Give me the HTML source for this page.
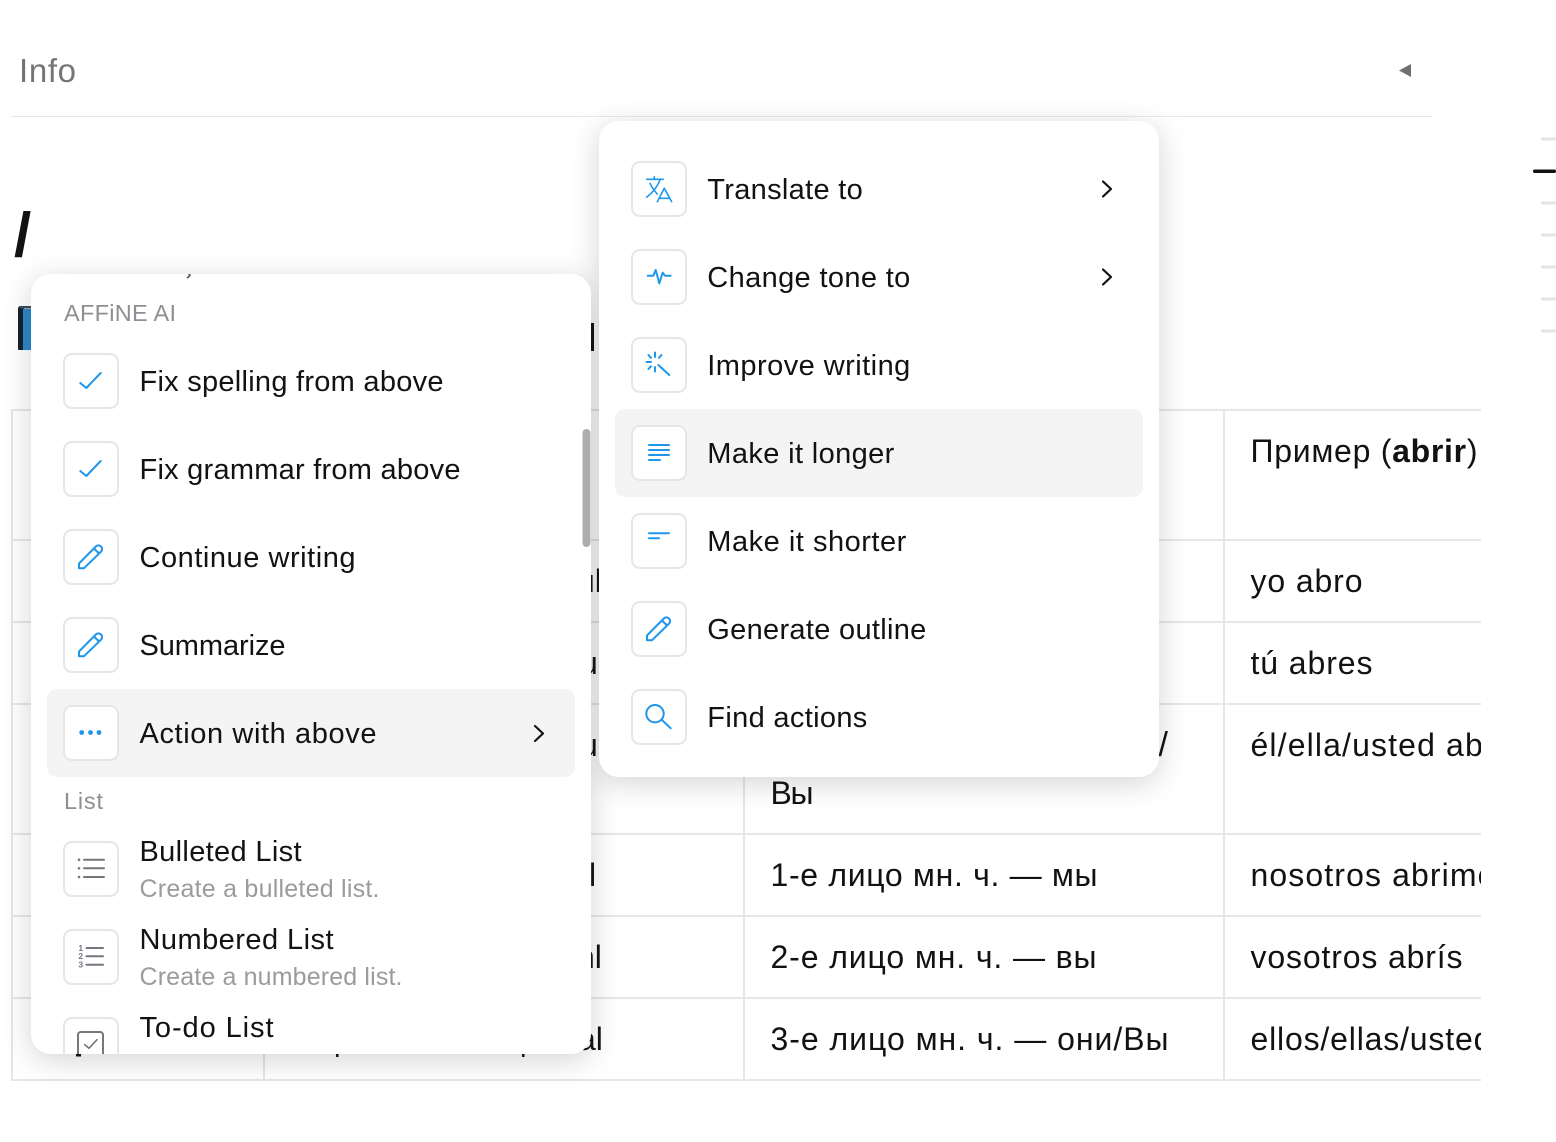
<!DOCTYPE html>
<html lang="en"><head><meta charset="utf-8"><title>Info</title>
<style>
html,body{margin:0;padding:0;background:#fff;width:1556px;height:1142px;overflow:hidden}
body{position:relative;font-family:"Liberation Sans",sans-serif}
svg{position:absolute;overflow:hidden}
svg text{font-family:"Liberation Sans",sans-serif;fill:#121212}
.menu{position:absolute;background:#fff;border-radius:20px;width:560px;overflow:hidden}
.shadow{position:absolute;border-radius:20px;width:560px;box-shadow:0 6px 30px rgba(40,40,50,.2)}
.t{font-size:29px}
.g{font-size:23.5px;fill:#8f8e93!important}
.d{font-size:25px;fill:#9b9b9e!important}
.r{font-size:32px}
.b{fill:#fff;stroke:#e6e6e6;stroke-width:2}
.i{fill:none;stroke:#1e96eb;stroke-width:2;stroke-linecap:round;stroke-linejoin:round}
.k{fill:none;stroke:#77757d;stroke-width:2;stroke-linecap:round;stroke-linejoin:round}
.c{fill:none;stroke:#121212;stroke-width:2.2;stroke-linecap:round;stroke-linejoin:round}
</style></head><body>

<svg width="1556" height="1142" style="left:0;top:0">
  <text x="19" y="82" font-size="33" textLength="57" style="fill:#757575">Info</text>
  <path d="M1399 70.5 L1411 64 V77 Z" fill="#6f6f6f"/>
  <rect x="11" y="116" width="1422" height="1" fill="#e8e8e8"/>
  <g fill="#e4e4e4">
    <rect x="1541" y="137.5" width="15" height="3" rx="1.5"/>
    <rect x="1541" y="201.5" width="15" height="3" rx="1.5"/>
    <rect x="1541" y="233.5" width="15" height="3" rx="1.5"/>
    <rect x="1541" y="265.5" width="15" height="3" rx="1.5"/>
    <rect x="1541" y="297.5" width="15" height="3" rx="1.5"/>
    <rect x="1541" y="329.5" width="15" height="3" rx="1.5"/>
  </g>
  <rect x="1533" y="169.5" width="23" height="3.5" rx="1.7" fill="#111"/>

  <text x="14" y="256" font-size="62" font-weight="bold" style="fill:#121212">/</text>

  <rect x="18" y="307" width="6" height="43" rx="1" fill="#15202b"/>
  <rect x="23" y="309" width="8" height="41" fill="#2b86c9"/>
  <rect x="19" y="306" width="12" height="2.5" fill="#3a4a58"/>
  <rect x="591" y="323" width="3" height="28" fill="#121212"/>

  <g fill="#e6e6e6">
    <rect x="11" y="409" width="1470" height="2"/>
    <rect x="11" y="539" width="1470" height="2"/>
    <rect x="11" y="621" width="1470" height="2"/>
    <rect x="11" y="703" width="1470" height="2"/>
    <rect x="11" y="833" width="1470" height="2"/>
    <rect x="11" y="915" width="1470" height="2"/>
    <rect x="11" y="997" width="1470" height="2"/>
    <rect x="11" y="1079" width="1470" height="2"/>
    <rect x="11" y="409" width="2" height="672"/>
    <rect x="263" y="409" width="2" height="672"/>
    <rect x="743" y="409" width="2" height="672"/>
    <rect x="1223" y="409" width="2" height="672"/>
  </g>

  <g class="r">
    <text class="r" x="577" y="592">ul</text>
    <text class="r" x="580" y="674">u</text>
    <text class="r" x="580" y="756">u</text>
    <text class="r" x="589" y="886">l</text>
    <text class="r" x="577" y="968">nl</text>
    <text class="r" x="578" y="1050">al</text>
    <rect x="336" y="1054" width="2.5" height="3" fill="#121212"/>
    <rect x="522" y="1054" width="2.5" height="3" fill="#121212"/>
    <rect x="76" y="1054" width="5" height="2.5" fill="#121212"/>

    <text class="r" x="1158.500" y="756" style="font-size:34px" textLength="9">/</text>
    <text class="r" x="770.500" y="804" textLength="43">Вы</text>
    <text class="r" x="770.500" y="886" textLength="327">1-е лицо мн. ч. — мы</text>
    <text class="r" x="770.500" y="968" textLength="326">2-е лицо мн. ч. — вы</text>
    <text class="r" x="770.500" y="1050" textLength="398">3-е лицо мн. ч. — они/Вы</text>
  </g>
  <svg x="0" y="0" width="1481" height="1142">
    <text class="r" x="1250.500" y="462" textLength="227">Пример (<tspan font-weight="bold">abrir</tspan>)</text>
    <text class="r" x="1250.500" y="592" textLength="112">yo abro</text>
    <text class="r" x="1250.500" y="674" textLength="122">tú abres</text>
    <text class="r" x="1250.500" y="756" textLength="263">él/ella/usted abre</text>
    <text class="r" x="1250.500" y="886" textLength="262">nosotros abrimos</text>
    <text class="r" x="1250.500" y="968" textLength="212">vosotros abrís</text>
    <text class="r" x="1250.500" y="1050" textLength="372">ellos/ellas/ustedes abren</text>
  </svg>
</svg>

<div class="shadow" style="left:31px;top:274px;height:780px"></div>
<div class="shadow" style="left:599px;top:121px;height:656px"></div>

<div class="menu" style="left:31px;top:274px;height:780px">
<svg width="560" height="780" style="left:0;top:0">
  <defs>
    <path id="pen" d="M16 39.200 V34.500 L32.800 17.500 A3.600 3.600 0 0 1 38 22.700 L21 39.200 Z M31 19.500 L36 24.500"/>
  </defs>
  <path d="M157 -1 L159 1 Q158 3 156 4" fill="none" stroke="#555" stroke-width="1.600"/>
  <text class="g" x="33" y="47" textLength="112">AFFiNE AI</text>

  <rect x="16" y="415" width="528" height="88" rx="10" fill="#f4f4f4"/>

  <g transform="translate(32,79)"><rect class="b" x="1" y="1" width="54" height="54" rx="8"/><path class="i" d="M17.300 30 L23.300 35 L37.700 20"/></g>
  <text class="t" x="108.500" y="117" textLength="304">Fix spelling from above</text>

  <g transform="translate(32,167)"><rect class="b" x="1" y="1" width="54" height="54" rx="8"/><path class="i" d="M17.300 30 L23.300 35 L37.700 20"/></g>
  <text class="t" x="108.500" y="205" textLength="321">Fix grammar from above</text>

  <g transform="translate(32,255)"><rect class="b" x="1" y="1" width="54" height="54" rx="8"/><use href="#pen" class="i"/></g>
  <text class="t" x="108.500" y="293" textLength="216">Continue writing</text>

  <g transform="translate(32,343)"><rect class="b" x="1" y="1" width="54" height="54" rx="8"/><use href="#pen" class="i"/></g>
  <text class="t" x="108.500" y="381" textLength="146">Summarize</text>

  <g transform="translate(32,431)"><rect class="b" x="1" y="1" width="54" height="54" rx="8"/>
    <circle cx="18.700" cy="27.500" r="2.400" fill="#1e96eb"/><circle cx="27.500" cy="27.500" r="2.400" fill="#1e96eb"/><circle cx="36" cy="27.500" r="2.400" fill="#1e96eb"/></g>
  <text class="t" x="108.500" y="469" textLength="237">Action with above</text>
  <path class="c" d="M504 452 L512 459.500 L504 467"/>

  <text class="g" x="33" y="535" textLength="39">List</text>

  <g transform="translate(32,567)"><rect class="b" x="1" y="1" width="54" height="54" rx="8"/>
    <path class="k" d="M21 18.700 H41 M21 27.300 H41 M21 36 H41"/>
    <circle cx="16" cy="18.700" r="1.300" fill="#77757d"/><circle cx="16" cy="27.300" r="1.300" fill="#77757d"/><circle cx="16" cy="36" r="1.300" fill="#77757d"/></g>
  <text class="t" x="108.500" y="587" textLength="162">Bulleted List</text>
  <text class="d" x="108.500" y="623" textLength="240">Create a bulleted list.</text>

  <g transform="translate(32,655)"><rect class="b" x="1" y="1" width="54" height="54" rx="8"/>
    <path class="k" d="M23.500 19 H40 M23.500 27.300 H40 M23.500 35.700 H40"/>
    <text x="17.700" y="22" font-size="8.500" font-weight="bold" text-anchor="middle" style="fill:#77757d">1</text>
    <text x="17.700" y="30" font-size="8.500" font-weight="bold" text-anchor="middle" style="fill:#77757d">2</text>
    <text x="17.700" y="38.500" font-size="8.500" font-weight="bold" text-anchor="middle" style="fill:#77757d">3</text></g>
  <text class="t" x="108.500" y="675" textLength="194">Numbered List</text>
  <text class="d" x="108.500" y="711" textLength="263">Create a numbered list.</text>

  <g transform="translate(32,743)"><rect class="b" x="1" y="1" width="54" height="54" rx="8"/>
    <rect class="k" x="15" y="15" width="25" height="25" rx="3"/>
    <path class="k" d="M21.700 27.700 L26 31.300 L34 22.700" style="stroke-width:1.600"/></g>
  <text class="t" x="108.500" y="763" textLength="134">To-do List</text>

  <rect x="551.500" y="155" width="8" height="118" rx="4" fill="#adadad"/>
</svg>
</div>

<div class="menu" style="left:599px;top:121px;height:656px">
<svg width="560" height="656" style="left:0;top:0">
  <rect x="16" y="288" width="528" height="88" rx="10" fill="#f4f4f4"/>

  <g transform="translate(32,40)"><rect class="b" x="1" y="1" width="54" height="54" rx="8"/>
    <path class="i" style="stroke-width:1.600" d="M15.700 18.300 H32.300 M23.300 15.700 V18.300 M29 19 Q25 29 15.700 36.300 M19 22.300 Q22 28.500 26.300 33 M26.300 40.700 L33.300 27.300 L40.700 40.700 M28.300 37.300 H38.300"/></g>
  <text class="t" x="108.300" y="78" textLength="155.500">Translate to</text>
  <path class="c" d="M504 60.500 L512 68 L504 75.500"/>

  <g transform="translate(32,128)"><rect class="b" x="1" y="1" width="54" height="54" rx="8"/>
    <path class="i" d="M16.700 26.700 H22.300 L24.700 21 L28.300 34.300 L31.700 23.700 L34 26.700 H39.700"/></g>
  <text class="t" x="108.300" y="166" textLength="203">Change tone to</text>
  <path class="c" d="M504 148.500 L512 156 L504 163.500"/>

  <g transform="translate(32,216)"><rect class="b" x="1" y="1" width="54" height="54" rx="8"/>
    <path class="i" d="M27.300 28 L38.300 38 M24 15.500 V20 M30.500 18 L28 20.800 M17.500 18 L20 20.800 M15.500 25 H20 M17.500 32 L20 29.300 M24 30 V34.500"/></g>
  <text class="t" x="108.300" y="254" textLength="203">Improve writing</text>

  <g transform="translate(32,304)"><rect class="b" x="1" y="1" width="54" height="54" rx="8"/>
    <path class="i" d="M18 20 H38 M18 25 H38 M18 30 H38 M18 35 H29"/></g>
  <text class="t" x="108.300" y="342" textLength="187">Make it longer</text>

  <g transform="translate(32,392)"><rect class="b" x="1" y="1" width="54" height="54" rx="8"/>
    <path class="i" d="M18 20.300 H38 M18 25.300 H28"/></g>
  <text class="t" x="108.300" y="430" textLength="199">Make it shorter</text>

  <g transform="translate(32,480)"><rect class="b" x="1" y="1" width="54" height="54" rx="8"/>
    <path class="i" d="M16 39.200 V34.500 L32.800 17.500 A3.600 3.600 0 0 1 38 22.700 L21 39.200 Z M31 19.500 L36 24.500"/></g>
  <text class="t" x="108.300" y="518" textLength="219">Generate outline</text>

  <g transform="translate(32,568)"><rect class="b" x="1" y="1" width="54" height="54" rx="8"/>
    <circle class="i" cx="24" cy="24.700" r="8.700"/><path class="i" d="M31 31 L39.700 39.300"/></g>
  <text class="t" x="108.300" y="606" textLength="160">Find actions</text>
</svg>
</div>

</body></html>
